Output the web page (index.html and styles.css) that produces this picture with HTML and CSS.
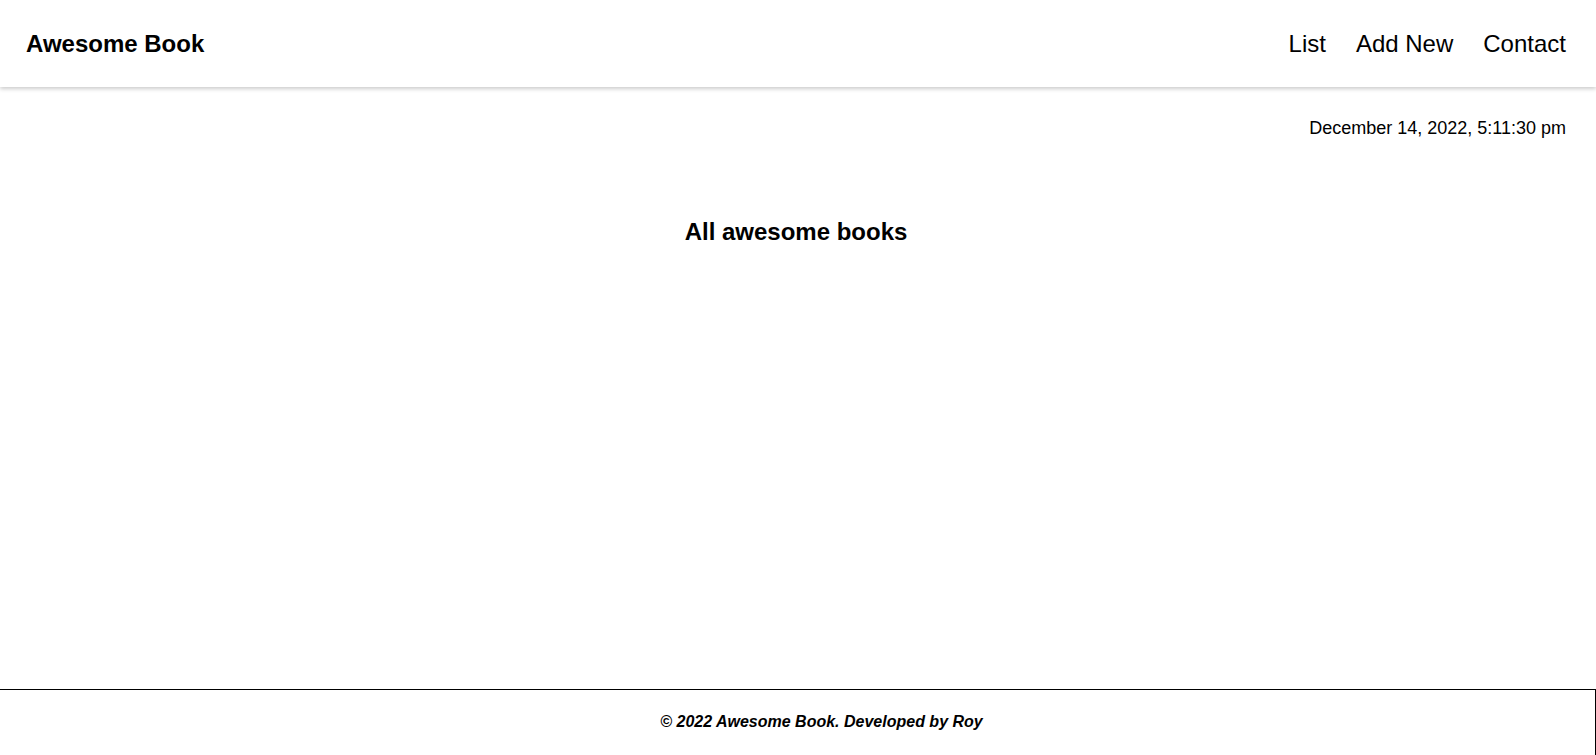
FILE: index.html
```html
<!DOCTYPE html>
<html lang="en">
<head>
<meta charset="utf-8">
<title>Awesome Book</title>
<link rel="stylesheet" href="styles.css">
</head>
<body>
<div class="page">
  <header class="topbar">
    <h1 class="brand">Awesome Book</h1>
    <nav class="nav">
      <a class="nav-link" href="#">List</a>
      <a class="nav-link" href="#">Add New</a>
      <a class="nav-link" href="#">Contact</a>
    </nav>
  </header>
  <main class="main">
    <p class="date">December 14, 2022, 5:11:30 pm</p>
    <h2 class="title">All awesome books</h2>
  </main>
  <footer class="footer">
    <p class="copy">© 2022 Awesome Book. Developed by Roy</p>
  </footer>
</div>
</body>
</html>
```

FILE: styles.css
```css
* { box-sizing: border-box; }
html, body { margin: 0; padding: 0; }
body {
  font-family: "Liberation Sans", Arial, sans-serif;
  color: #000;
  background: #fff;
}
.page {
  display: flex;
  flex-direction: column;
  min-height: 100vh;
}
.topbar {
  height: 87px;
  display: flex;
  align-items: center;
  justify-content: space-between;
  padding: 0 30px 0 26px;
  box-shadow: 0 2px 4px rgba(0, 0, 0, 0.2);
  position: relative;
  z-index: 1;
}
.brand {
  margin: 0;
  font-size: 24px;
  font-weight: 700;
}
.nav {
  display: flex;
  gap: 30px;
}
.nav-link {
  color: #000;
  text-decoration: none;
  font-size: 24px;
}
.main {
  flex: 1;
  padding: 31px 30px 0 26px;
}
.date {
  margin: 0;
  text-align: right;
  font-size: 18px;
}
.title {
  margin: 79px 0 0;
  text-align: center;
  font-size: 24px;
  font-weight: 700;
}
.footer {
  border-top: 1px solid #000;
  border-right: 1px solid #000;
  padding: 23px 0 24px 48px;
  text-align: center;
}
.copy {
  margin: 0;
  font-size: 16px;
  font-weight: 700;
  font-style: italic;
}
```
